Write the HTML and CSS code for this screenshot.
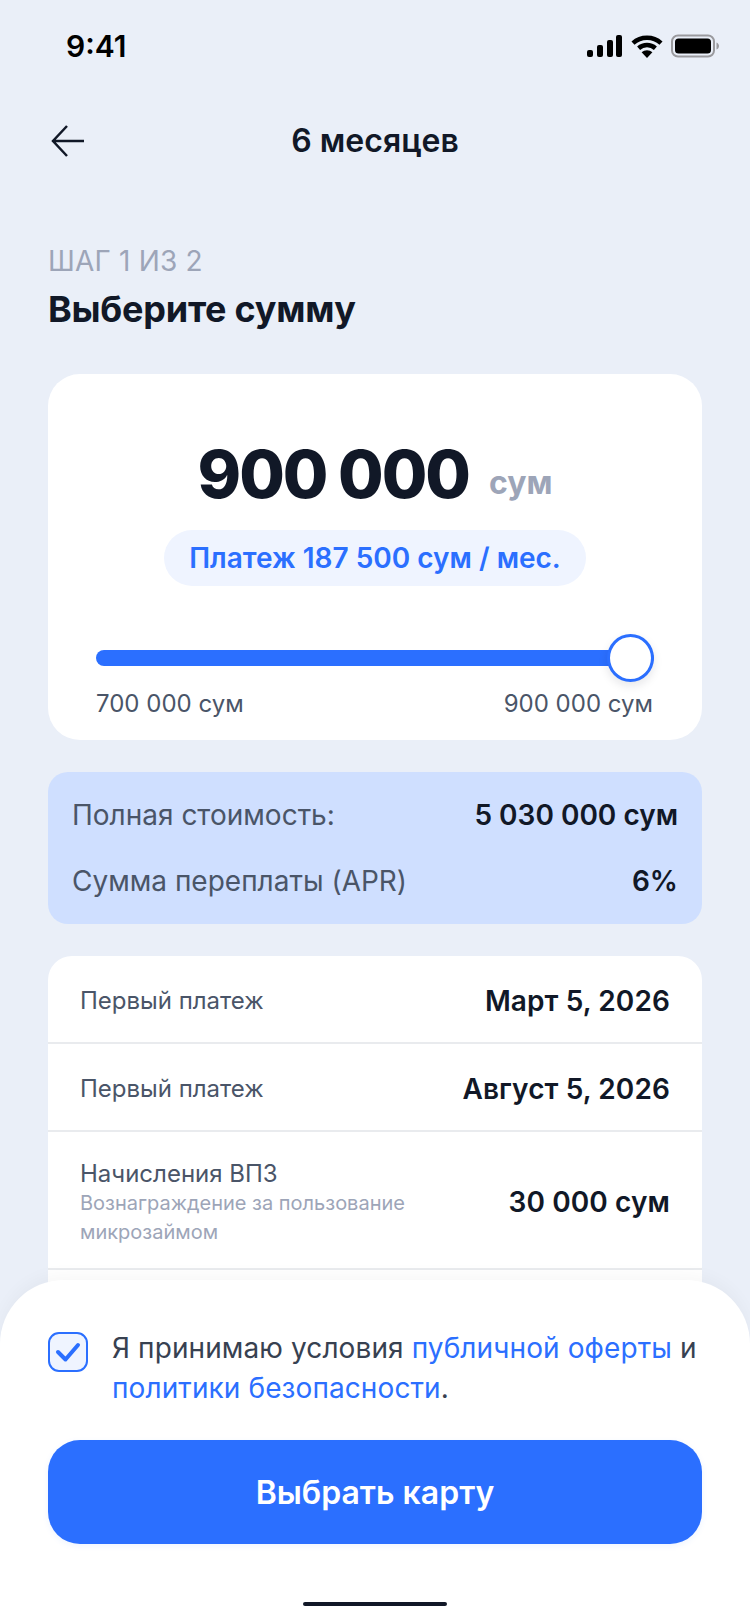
FILE: index.html
```html
<!DOCTYPE html>
<html lang="ru">
<head>
<meta charset="utf-8">
<title>6 месяцев</title>
<link rel="stylesheet" href="styles.css">
</head>
<body>
<div class="screen">
  <div class="status">
    <span class="time">9:41</span>
    <div class="status-icons">
      <svg width="36" height="22" viewBox="0 0 36 22"><rect x="0" y="15" width="6" height="7" rx="2"/><rect x="10" y="10" width="6" height="12" rx="2"/><rect x="20" y="5" width="6" height="17" rx="2"/><rect x="29" y="0" width="6" height="22" rx="2"/></svg>
      <svg width="32" height="23" viewBox="0 0 32 23"><path class="wifi" d="M2 8.2C9.8 1 22.2 1 30 8.2M7.6 13.2c4.8-4.2 12-4.2 16.8 0"/><path d="M16 23l-5.400-5.800c3-2.700 7.800-2.700 10.800 0z"/></svg>
      <svg width="48" height="24" viewBox="0 0 48 24"><rect class="batt" x="1" y="1.500" width="42" height="21" rx="6"/><rect x="4" y="4.500" width="36" height="15" rx="3.500"/><path class="cap" d="M45.500 8.500c1.500.5 2.500 2 2.500 3.500s-1 3-2.500 3.500z"/></svg>
    </div>
  </div>
  <header class="nav">
    <svg class="back" width="34" height="34" viewBox="0 0 34 34"><path d="M33 17H2M16 2L2 17l14 15"/></svg>
    <h1 class="nav-title">6 месяцев</h1>
  </header>
  <main class="content">
    <p class="step">ШАГ 1 ИЗ 2</p>
    <h2 class="heading">Выберите сумму</h2>
    <section class="amount-card">
      <div class="amount"><span class="amount-num">900 000</span><span class="amount-cur">сум</span></div>
      <div class="pill">Платеж 187 500 сум / мес.</div>
      <div class="slider"><div class="track"></div><div class="thumb"></div></div>
      <div class="range"><span>700 000 сум</span><span>900 000 сум</span></div>
    </section>
    <section class="summary">
      <div class="summary-row"><span>Полная стоимость:</span><b>5 030 000 сум</b></div>
      <div class="summary-row"><span>Сумма переплаты (APR)</span><b>6%</b></div>
    </section>
    <section class="list">
      <div class="row row-short"><span class="row-label">Первый платеж</span><b class="row-value">Март 5, 2026</b></div>
      <div class="row row-short"><span class="row-label">Первый платеж</span><b class="row-value">Август 5, 2026</b></div>
      <div class="row row-tall">
        <div class="row-text"><span class="row-label">Начисления ВПЗ</span><span class="row-sub">Вознаграждение за пользование микрозаймом</span></div>
        <b class="row-value">30 000 сум</b>
      </div>
      <div class="row"></div>
    </section>
  </main>
  <footer class="sheet">
    <div class="agree">
      <span class="check"><svg width="26" height="22" viewBox="0 0 26 22"><path d="M3 11l7.500 7.500L23 4"/></svg></span>
      <p class="agree-text">Я принимаю условия <a>публичной оферты</a> и <a>политики безопасности</a>.</p>
    </div>
    <button class="cta">Выбрать карту</button>
    <div class="home"></div>
  </footer>
</div>
</body>
</html>
```
FILE: styles.css
```css
* { box-sizing: border-box; margin: 0; padding: 0; }
html, body { width: 750px; height: 1624px; overflow: hidden; }
body { font-family: Inter, "Noto Sans", sans-serif; background: #eaeff8; color: #111827; }
.screen { position: relative; width: 750px; height: 1624px; overflow: hidden; }

.status { height: 88px; padding: 28px 31px 0 66px; display: flex; justify-content: space-between; align-items: flex-start; }
.time { font-size: 30px; line-height: 36px; font-weight: 600; color: #000; }
.status-icons { display: flex; align-items: center; gap: 8px; height: 36px; }
.status-icons svg { fill: #000; display: block; }
.wifi { fill: none; stroke: #000; stroke-width: 4.500; }
.batt { fill: none; stroke: #9a9a9e; stroke-width: 2; }
.cap { fill: #9a9a9e; }

.nav { position: relative; height: 106px; display: flex; align-items: center; justify-content: center; }
.back { position: absolute; left: 51px; top: 36px; fill: none; stroke: #111827; stroke-width: 2.500; }
.nav-title { font-size: 32px; line-height: 34px; font-weight: 600; color: #111827; }

.content { padding: 51px 48px 0; }
.step { font-size: 28px; line-height: 32px; letter-spacing: .2px; color: #9da5b8; }
.heading { margin-top: 11px; font-size: 36px; line-height: 42px; font-weight: 700; letter-spacing: -.25px; color: #111827; }

.amount-card { margin-top: 44px; height: 366px; padding: 66px 48px 0; background: #fff; border-radius: 32px; display: flex; flex-direction: column; align-items: center; }
.amount { display: flex; align-items: flex-end; gap: 20px; }
.amount-num { font-size: 66px; line-height: 68px; font-weight: 800; letter-spacing: -2px; word-spacing: -1px; }
.amount-cur { font-size: 32px; line-height: 51px; font-weight: 700; color: #9da5b8; }
.pill { margin-top: 22px; height: 56px; padding: 0 25px; border-radius: 28px; background: #eff4ff; color: #2b6fff; font-size: 28px; font-weight: 600; display: flex; align-items: center; }
.slider { position: relative; align-self: stretch; margin-top: 64px; height: 16px; }
.track { height: 16px; width: 100%; border-radius: 8px; background: #2b6fff; }
.thumb { position: absolute; right: 0; top: -16px; width: 47px; height: 48px; border-radius: 50%; background: #fff; border: 3px solid #2b6fff; box-shadow: 0 4px 10px rgba(17,24,39,.1); }
.range { align-self: stretch; margin-top: 23px; padding-right: 1px; display: flex; justify-content: space-between; font-size: 24px; line-height: 30px; color: #4a5568; }

.summary { margin-top: 32px; height: 152px; padding: 10px 24px; background: #cfdfff; border-radius: 20px; display: flex; flex-direction: column; justify-content: space-around; }
.summary-row { display: flex; justify-content: space-between; align-items: center; font-size: 28px; line-height: 34px; color: #4a5568; }
.summary-row b { font-weight: 600; color: #111827; }

.list { margin-top: 32px; background: #fff; border-radius: 24px; overflow: hidden; }
.row { height: 88px; padding: 0 32px; display: flex; justify-content: space-between; align-items: center; border-bottom: 2px solid #e9ebee; }
.row-short { padding-top: 4px; }
.row-tall { height: 138px; }
.row-tall .row-value { padding-top: 3px; }
.row-label { font-size: 24px; line-height: 30px; color: #4a5568; }
.row-value { font-size: 28px; letter-spacing: .1px; font-weight: 600; color: #111827; white-space: nowrap; }
.row-text { width: 340px; padding-top: 5px; display: flex; flex-direction: column; }
.row-sub { font-size: 20px; line-height: 29px; color: #9da5b8; }

.sheet { position: absolute; left: 0; right: 0; bottom: 0; height: 344px; padding: 48px 48px 0; background: #fff; border-radius: 64px 64px 0 0; box-shadow: 0 -6px 16px rgba(17,24,39,.03); }
.agree { display: flex; gap: 24px; align-items: flex-start; }
.check { flex: none; width: 40px; height: 40px; margin-top: 4px; border: 2px solid #2b6fff; border-radius: 11px; background: #eff4ff; display: flex; align-items: center; justify-content: center; }
.check svg { fill: none; stroke: #2b6fff; stroke-width: 4; stroke-linecap: round; stroke-linejoin: round; }
.agree-text { font-size: 28px; line-height: 40px; letter-spacing: .1px; color: #374151; }
.agree-text a { color: #2b6fff; }
.cta { display: block; width: 100%; height: 104px; margin-top: 32px; border: 0; border-radius: 32px; background: #2b6fff; color: #fff; font-family: inherit; font-size: 32px; font-weight: 600; box-shadow: 0 2px 6px rgba(43,111,255,.08); }
.home { width: 144px; height: 4px; margin: 58px auto 0; border-radius: 2px; background: #111827; }
```
